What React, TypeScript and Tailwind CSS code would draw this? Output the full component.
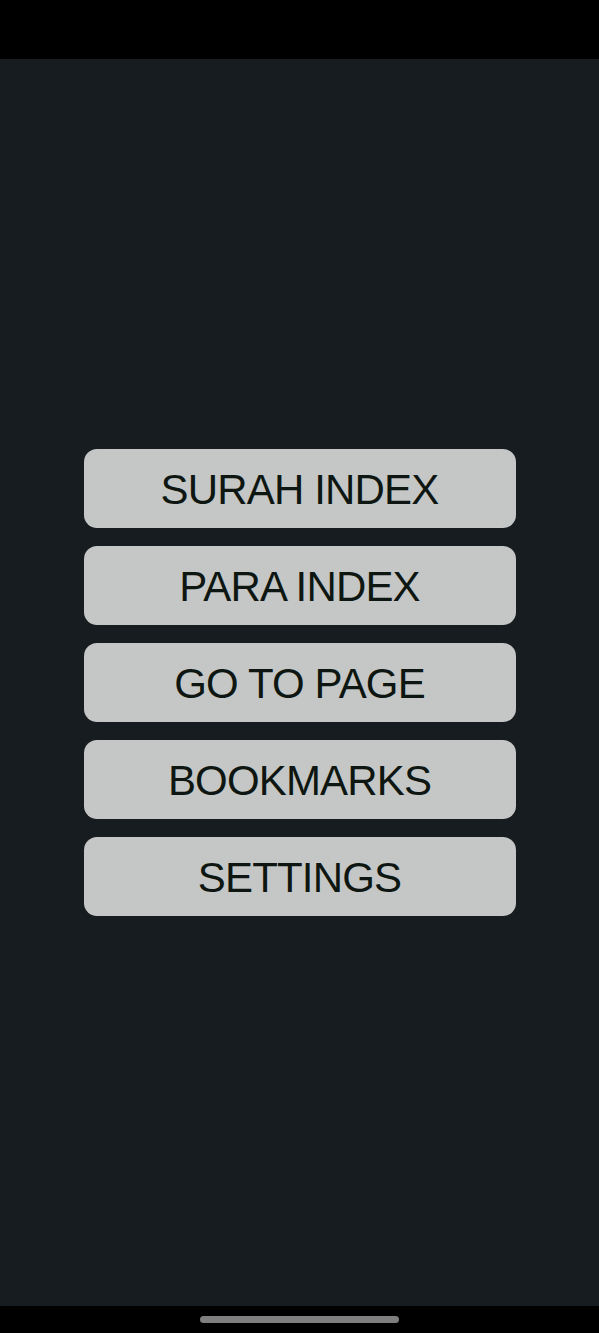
const items = ['SURAH INDEX', 'PARA INDEX', 'GO TO PAGE', 'BOOKMARKS', 'SETTINGS'];

export default function App() {
  return (
    <div className="flex h-[1333px] w-full flex-col bg-black font-['Liberation_Sans',Arial,sans-serif]">
      <div className="h-[59px] bg-black" />
      <main className="flex flex-1 flex-col items-center justify-center gap-[18px] bg-[#161c1f]">
        {items.map((label) => (
          <button
            key={label}
            className="flex h-[79px] w-[432px] items-center justify-center rounded-[13px] bg-[#c5c7c6] pt-[2px] text-[42px] tracking-[-0.02em] text-[#0e1611]"
          >
            {label}
          </button>
        ))}
      </main>
      <div className="flex h-[27px] items-center justify-center bg-black">
        <div className="h-[7px] w-[199px] rounded-full bg-[#7f7f7f]" />
      </div>
    </div>
  );
}
